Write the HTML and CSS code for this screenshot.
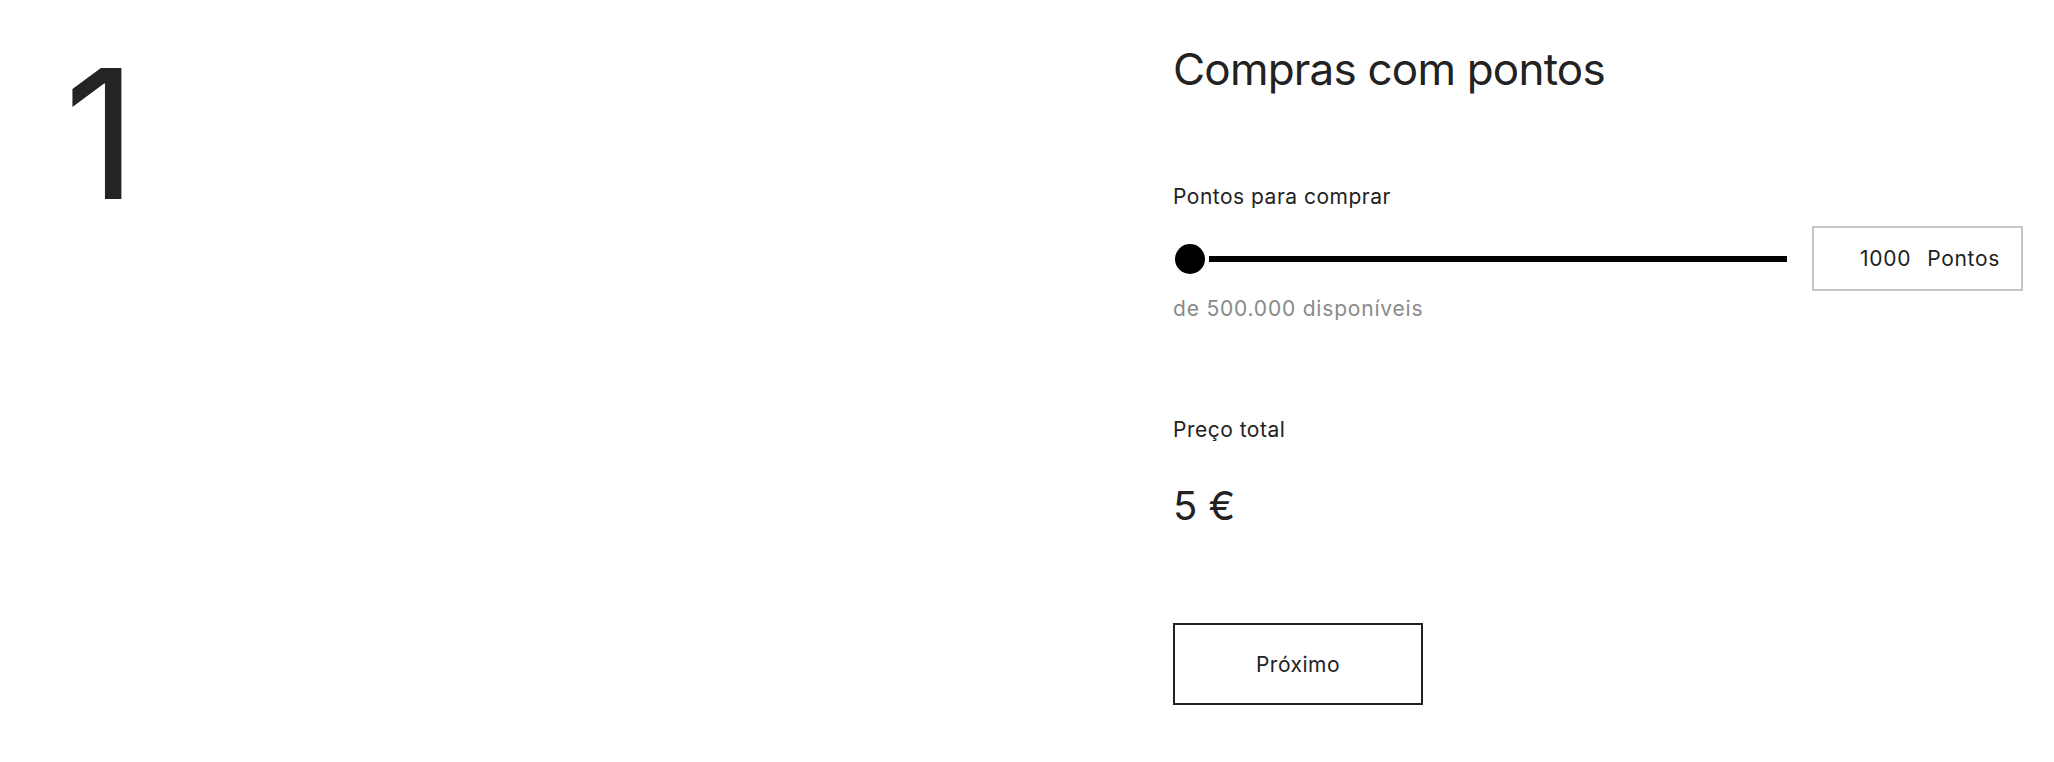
FILE: index.html
```html
<!DOCTYPE html>
<html lang="pt">
<head>
<meta charset="utf-8">
<title>Compras com pontos</title>
<link rel="stylesheet" href="styles.css">
</head>
<body>
<div class="page">
  <div class="step">1</div>
  <div class="panel">
    <h1 class="title">Compras com pontos</h1>
    <div class="label">Pontos para comprar</div>
    <div class="slider-row">
      <div class="slider">
        <div class="thumb"></div>
        <div class="track"></div>
      </div>
      <div class="points-box">
        <span class="points-value">1000</span>
        <span class="points-unit">Pontos</span>
      </div>
    </div>
    <div class="hint">de 500.000 disponíveis</div>
    <div class="label total-label">Preço total</div>
    <div class="price">5 €</div>
    <button class="next">Próximo</button>
  </div>
</div>
</body>
</html>
```

FILE: styles.css
```css
html, body {
  margin: 0;
  padding: 0;
  background: #ffffff;
}
body {
  font-family: "Inter", "Noto Sans", sans-serif;
  color: #222222;
}
.page {
  display: flex;
  justify-content: space-between;
  width: 2054px;
  height: 762px;
  box-sizing: border-box;
  padding-right: 31px;
}
.step {
  font-size: 180px;
  line-height: 180px;
  font-weight: 400;
  color: #242424;
  padding-left: 64px;
  padding-top: 44px;
}
.panel {
  width: 850px;
  display: flex;
  flex-direction: column;
  align-items: flex-start;
  padding-top: 43px;
}
.title {
  margin: 0;
  font-size: 44px;
  line-height: 52px;
  font-weight: 400;
  letter-spacing: -0.8px;
  color: #222;
}
.label {
  font-size: 21px;
  line-height: 28px;
  letter-spacing: 0.5px;
  margin-top: 88px;
  color: #222;
}
.slider-row {
  align-self: stretch;
  display: flex;
  align-items: center;
  gap: 25px;
  margin-top: 15px;
  padding-left: 2px;
}
.slider {
  flex: 1;
  display: flex;
  align-items: center;
  gap: 4px;
}
.thumb {
  width: 30px;
  height: 30px;
  border-radius: 50%;
  background: #000;
  flex: none;
}
.track {
  flex: 1;
  height: 6px;
  background: #000;
}
.points-box {
  width: 211px;
  height: 65px;
  box-sizing: border-box;
  border: 2px solid #c6c6c6;
  display: flex;
  align-items: center;
  justify-content: flex-end;
  gap: 16px;
  padding-right: 21px;
  font-size: 21px;
  letter-spacing: 0.7px;
  color: #222;
}
.hint {
  font-size: 21px;
  line-height: 28px;
  letter-spacing: 0.8px;
  margin-top: 4px;
  color: #8a8a8a;
}
.total-label {
  margin-top: 93px;
}
.price {
  font-size: 40px;
  line-height: 48px;
  margin-top: 38px;
  color: #222;
}
.next {
  margin-top: 93px;
  width: 250px;
  height: 82px;
  box-sizing: border-box;
  border: 2px solid #222;
  background: #fff;
  font-family: inherit;
  font-size: 21px;
  letter-spacing: 0.5px;
  color: #222;
  cursor: pointer;
}
```
